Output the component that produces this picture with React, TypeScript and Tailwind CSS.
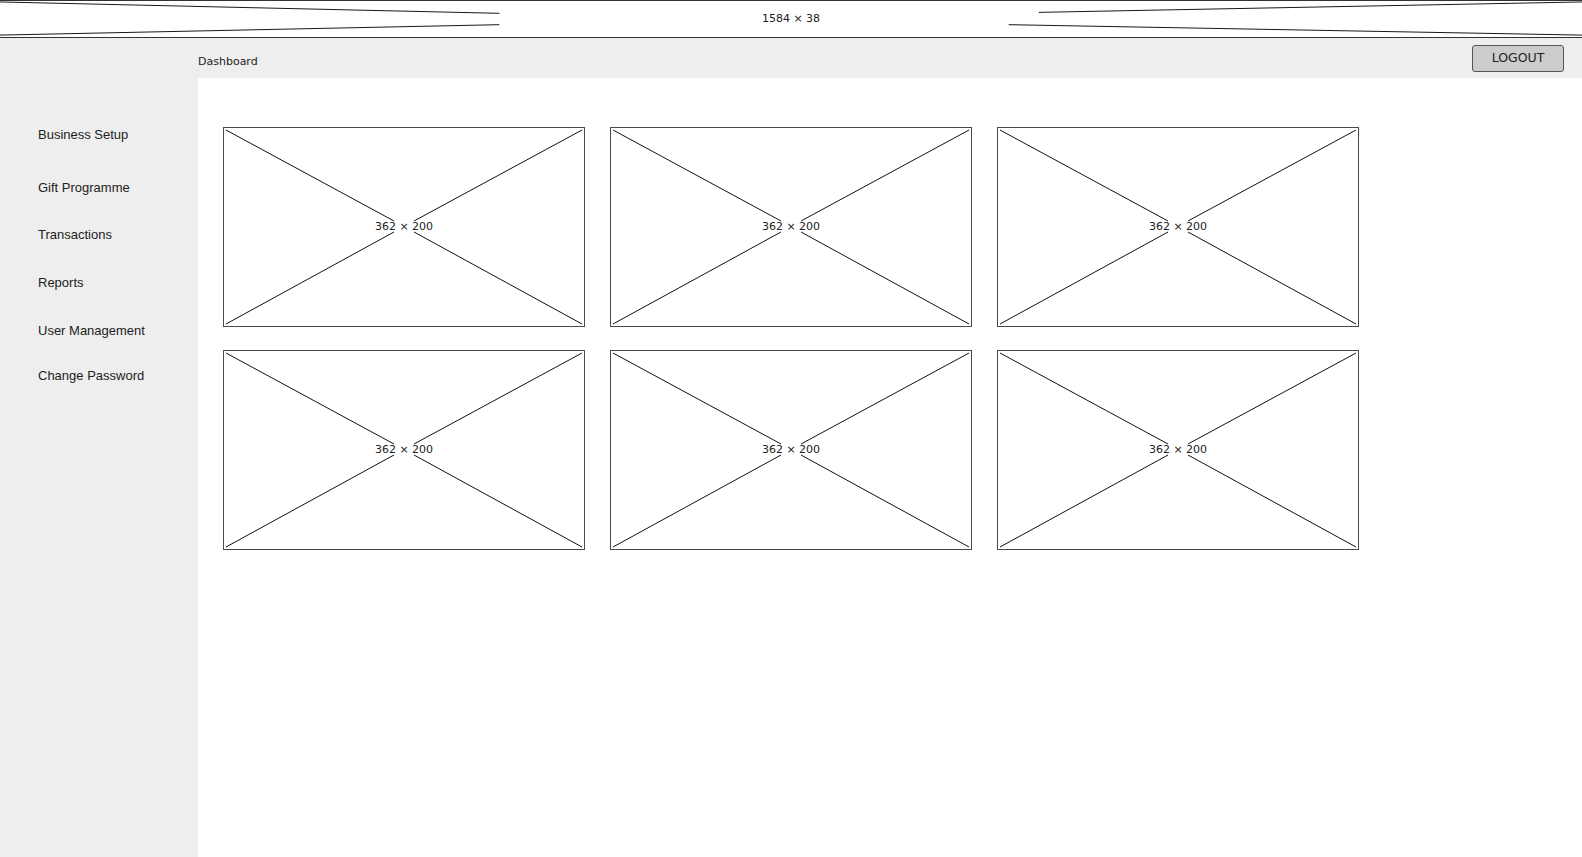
import React from 'react';

const handFont = { fontFamily: '"DejaVu Sans", "Liberation Sans", sans-serif' };

const navItems = [
  { label: 'Business Setup', mt: 'mt-0' },
  { label: 'Gift Programme', mt: 'mt-[33px]' },
  { label: 'Transactions', mt: 'mt-[27px]' },
  { label: 'Reports', mt: 'mt-[28px]' },
  { label: 'User Management', mt: 'mt-[28px]' },
  { label: 'Change Password', mt: 'mt-[25px]' },
];

const Banner: React.FC = () => (
  <div className="relative h-[38px] w-full overflow-hidden border-y border-[#333] bg-white">
    <svg
      className="absolute inset-0 h-full w-full"
      viewBox="0 0 1584 38"
      preserveAspectRatio="none"
    >
      <line x1="0" y1="1" x2="500" y2="13" stroke="#111" strokeWidth="1" />
      <line x1="0" y1="36" x2="500" y2="25" stroke="#111" strokeWidth="1" />
      <line x1="1040" y1="12" x2="1584" y2="1" stroke="#111" strokeWidth="1" />
      <line x1="1010" y1="25" x2="1584" y2="36" stroke="#111" strokeWidth="1" />
    </svg>
    <div className="relative flex h-full items-center justify-center">
      <span className="text-[11px] text-[#222]" style={handFont}>
        1584 × 38
      </span>
    </div>
  </div>
);

const Placeholder: React.FC = () => (
  <div className="relative h-[200px] w-[362px] border border-[#4a4a4a] bg-white">
    <svg className="absolute inset-0 h-full w-full" viewBox="0 0 360 198">
      <line x1="2" y1="2" x2="170" y2="93" stroke="#111" strokeWidth="1" />
      <line x1="190" y1="104" x2="358" y2="196" stroke="#111" strokeWidth="1" />
      <line x1="358" y1="2" x2="190" y2="93" stroke="#111" strokeWidth="1" />
      <line x1="170" y1="104" x2="2" y2="196" stroke="#111" strokeWidth="1" />
    </svg>
    <div className="relative flex h-full items-center justify-center">
      <span className="text-[11px] text-[#222]" style={handFont}>
        362 × 200
      </span>
    </div>
  </div>
);

const App: React.FC = () => {
  return (
    <div className="flex min-h-screen flex-col bg-white">
      <Banner />

      <header className="flex h-[40px] items-start justify-between bg-[#eeeeee] pl-[198px] pr-[18px]">
        <span className="pt-[16px] text-[11px] leading-4 text-[#222]" style={handFont}>
          Dashboard
        </span>
        <button
          className="mt-[7px] h-[27px] w-[92px] rounded-[3px] border border-[#555] bg-[#cccccc] text-[12.5px] text-[#222]"
          style={handFont}
        >
          LOGOUT
        </button>
      </header>

      <div className="flex flex-1">
        <aside
          className="flex w-[198px] shrink-0 flex-col bg-[#eeeeee] pl-[38px] pt-[47px]"
          style={{ fontFamily: '"Liberation Sans", Arial, sans-serif' }}
        >
          {navItems.map((item) => (
            <div key={item.label} className={`${item.mt} text-[13px] leading-5 text-[#222]`}>
              {item.label}
            </div>
          ))}
        </aside>

        <main className="flex-1 pl-[25px] pt-[49px]">
          <div className="grid grid-cols-[362px_362px_362px] gap-x-[25px] gap-y-[23px]">
            {Array.from({ length: 6 }).map((_, i) => (
              <Placeholder key={i} />
            ))}
          </div>
        </main>
      </div>
    </div>
  );
};

export default App;
